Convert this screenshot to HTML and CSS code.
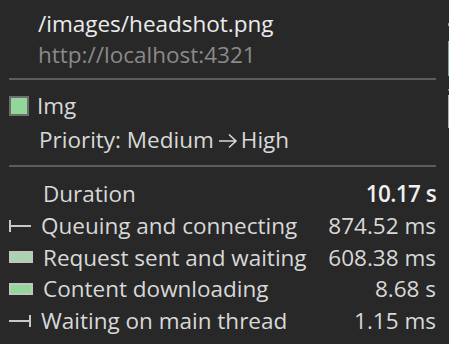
FILE: index.html
```html
<!DOCTYPE html>
<html>
<head>
<meta charset="utf-8">
<link rel="stylesheet" href="styles.css">
</head>
<body>
<div class="panel">
  <div class="header">
    <div class="title">/images/headshot.png</div>
    <div class="origin">http://localhost:4321</div>
  </div>
  <div class="divider"></div>
  <div class="resource">
    <div class="type-row"><span class="swatch"></span><span class="type">Img</span></div>
    <div class="priority">Priority: Medium<svg class="arrow" width="20" height="16" viewBox="0 0 20 16"><path d="M1 8H18M11 1.5L18 8L11 14.5" fill="none" stroke="#d8d8d8" stroke-width="1.6"/></svg>High</div>
  </div>
  <div class="divider"></div>
  <div class="timing">
    <span class="icon"></span><span class="label">Duration</span><span class="value strong">10.17 s</span>
    <span class="icon"><svg width="24" height="14" viewBox="0 0 24 14"><rect x="0" y="1" width="2" height="12" fill="#c8c8c8"/><rect x="0" y="6" width="22" height="2" fill="#c8c8c8"/></svg></span><span class="label lbl-tight">Queuing and connecting</span><span class="value">874.52 ms</span>
    <span class="icon"><span class="box box-wait"></span></span><span class="label">Request sent and waiting</span><span class="value">608.38 ms</span>
    <span class="icon"><span class="box box-dl"></span></span><span class="label">Content downloading</span><span class="value">8.68 s</span>
    <span class="icon"><svg width="24" height="14" viewBox="0 0 24 14"><rect x="0" y="6" width="22" height="2" fill="#c8c8c8"/><rect x="20" y="1" width="2" height="12" fill="#c8c8c8"/></svg></span><span class="label lbl-tight">Waiting on main thread</span><span class="value">1.15 ms</span>
  </div>
  <div class="edge"></div>
</div>
</body>
</html>
```
FILE: styles.css
```css
html, body {
  margin: 0;
  padding: 0;
  background: #282828;
}
.panel {
  position: relative;
  width: 449px;
  height: 344px;
  overflow: hidden;
  font-family: "Open Sans", "Noto Sans", sans-serif;
  font-size: 22.5px;
  color: #d8d8d8;
}
.header {
  padding: 9px 0 0 38px;
  height: 71px;
  box-sizing: border-box;
}
.title {
  line-height: 30px;
  color: #ececec;
}
.origin {
  line-height: 31px;
  color: #8a8a8a;
}
.divider {
  height: 2px;
  background: #5c5c5c;
  margin: 7px 13px 0 9px;
}
.resource {
  padding: 15px 0 0 9px;
  height: 78px;
  box-sizing: border-box;
}
.type-row {
  display: flex;
  align-items: center;
  gap: 8px;
  height: 22px;
}
.swatch {
  width: 16px;
  height: 16px;
  border: 2px solid #6e6e6e;
  background: #93d69a;
}
.type {
  line-height: 22px;
}
.priority {
  display: flex;
  align-items: center;
  padding-left: 30px;
  margin-top: 9px;
  line-height: 28px;
}
.arrow {
  margin: 2px 3px 0 4px;
}
.timing {
  display: grid;
  grid-template-columns: 34px 1fr auto;
  grid-auto-rows: 31.7px;
  align-items: center;
  padding: 11px 13px 0 9px;
}
.icon {
  display: flex;
  align-items: center;
  height: 14px;
}
.box {
  width: 20px;
  height: 8px;
  border: 2px solid #c4c4c4;
}
.box-wait { background: #a9d5ae; }
.box-dl { background: #8fd897; }
.label {
  white-space: nowrap;
}
.lbl-tight { margin-left: -2px; }
.value {
  text-align: right;
  white-space: nowrap;
}
.strong {
  font-weight: 600;
  color: #f0f0f0;
  letter-spacing: -0.6px;
}
.edge {
  position: absolute;
  right: 0;
  top: 0;
  width: 1px;
  height: 130px;
  background: linear-gradient(#282828 0 23px, #9a9a9a 23px 26px, #282828 26px 41px, #7fa898 41px 76px, #282828 76px 89px, #777 89px 91px, #282828 91px 95px, #b0b0b0 95px 128px, #282828 128px);
}
```
